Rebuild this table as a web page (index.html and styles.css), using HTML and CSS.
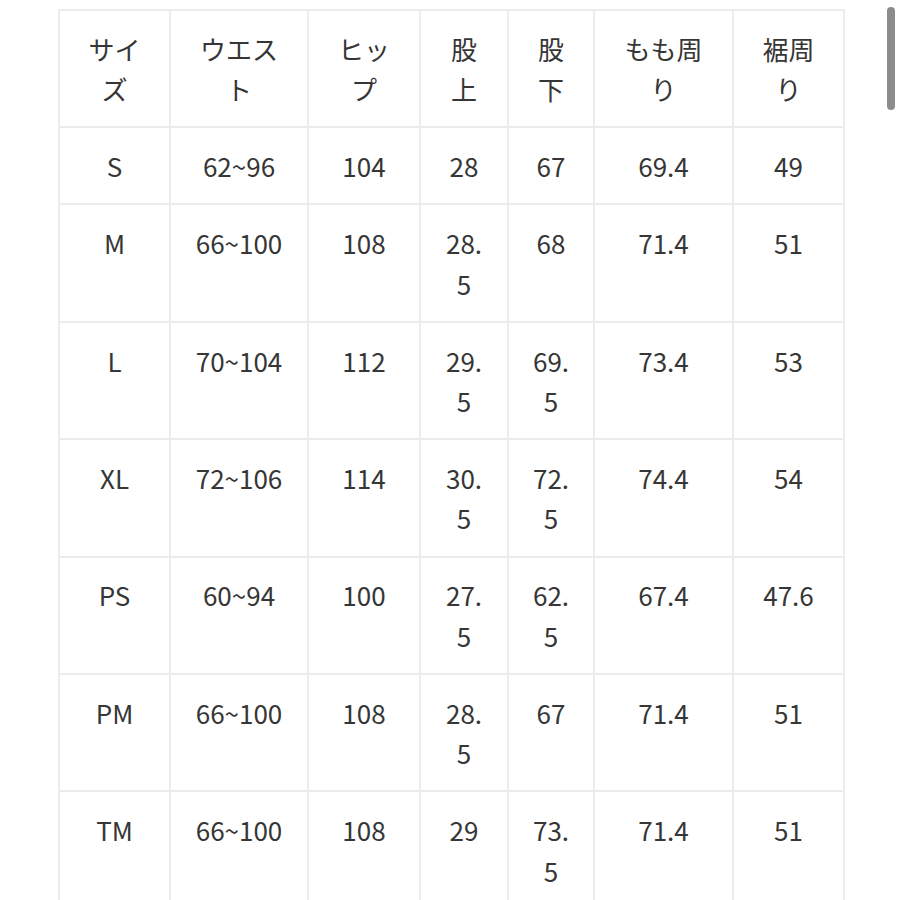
FILE: index.html
```html
<!DOCTYPE html>
<html lang="ja">
<head>
<meta charset="utf-8">
<title>サイズ表</title>
<link rel="stylesheet" href="styles.css">
</head>
<body>
<div class="page">
  <table class="size-table">
    <colgroup>
      <col class="c1"><col class="c2"><col class="c3"><col class="c4"><col class="c5"><col class="c6"><col class="c7">
    </colgroup>
    <thead>
      <tr><th>サイズ</th><th>ウエスト</th><th>ヒップ</th><th>股上</th><th>股下</th><th>もも周り</th><th>裾周り</th></tr>
    </thead>
    <tbody>
      <tr><td>S</td><td>62~96</td><td>104</td><td>28</td><td>67</td><td>69.4</td><td>49</td></tr>
      <tr><td>M</td><td>66~100</td><td>108</td><td>28.5</td><td>68</td><td>71.4</td><td>51</td></tr>
      <tr><td>L</td><td>70~104</td><td>112</td><td>29.5</td><td>69.5</td><td>73.4</td><td>53</td></tr>
      <tr><td>XL</td><td>72~106</td><td>114</td><td>30.5</td><td>72.5</td><td>74.4</td><td>54</td></tr>
      <tr><td>PS</td><td>60~94</td><td>100</td><td>27.5</td><td>62.5</td><td>67.4</td><td>47.6</td></tr>
      <tr><td>PM</td><td>66~100</td><td>108</td><td>28.5</td><td>67</td><td>71.4</td><td>51</td></tr>
      <tr><td>TM</td><td>66~100</td><td>108</td><td>29</td><td>73.5</td><td>71.4</td><td>51</td></tr>
    </tbody>
  </table>
  <div class="scrollbar"></div>
</div>
</body>
</html>
```
FILE: styles.css
```css
html, body {
  margin: 0;
  padding: 0;
  background: #ffffff;
}
body {
  font-family: "Noto Sans CJK JP", "Noto Sans", sans-serif;
  color: #363636;
}
.page {
  position: relative;
  width: 900px;
  height: 900px;
  overflow: hidden;
  padding: 9px 0 0 58px;
  box-sizing: border-box;
}
.size-table {
  table-layout: fixed;
  border-collapse: collapse;
  width: 787px;
}
.c1 { width: 111px; }
.c2 { width: 138px; }
.c3 { width: 112px; }
.c4 { width: 88px; }
.c5 { width: 86px; }
.c6 { width: 139px; }
.c7 { width: 111px; }
.size-table th,
.size-table td {
  border: 2px solid #ececec;
  padding: 17.8px 20px 16.8px;
  font-size: 26px;
  line-height: 40.4px;
  font-weight: 400;
  text-align: center;
  vertical-align: top;
  word-break: break-all;
  overflow-wrap: anywhere;
}
.scrollbar {
  position: absolute;
  left: 887px;
  top: 7px;
  width: 8px;
  height: 103px;
  border-radius: 4px;
  background: #8c8c8c;
}
```
